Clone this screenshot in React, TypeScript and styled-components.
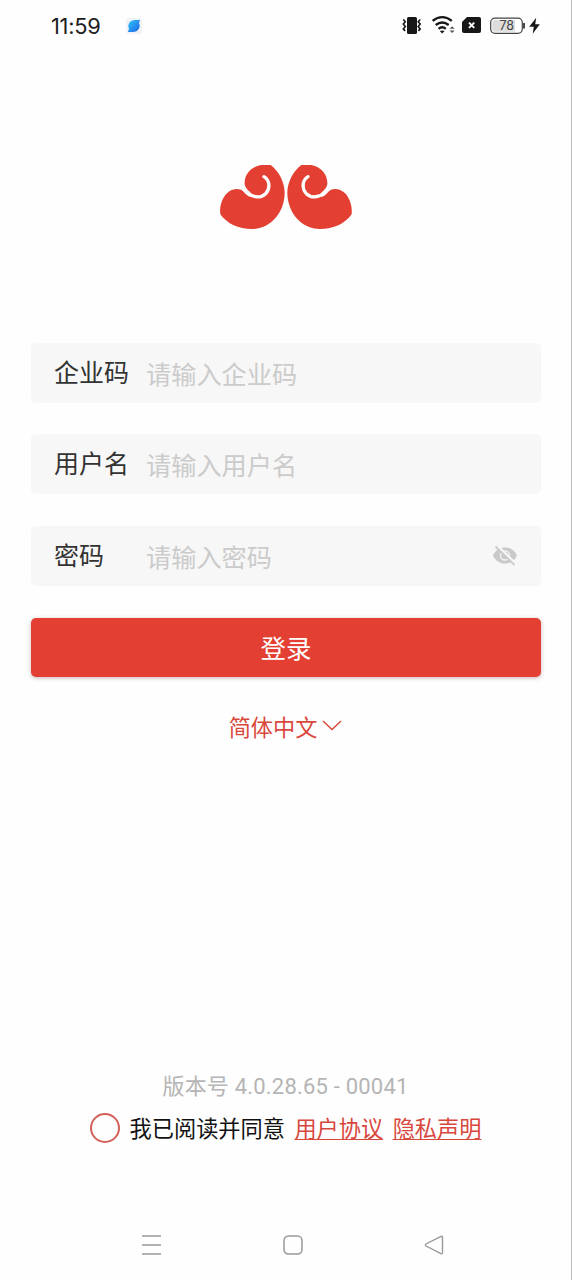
import React, { useState } from 'react';
import styled, { createGlobalStyle } from 'styled-components';

const red = '#e34033';

const GlobalStyle = createGlobalStyle`
  *, *::before, *::after { box-sizing: border-box; }
  body { margin: 0; background: #fefefe; }
  button, input { font: inherit; }
`;

const Screen = styled.main`
  display: flex;
  flex-direction: column;
  align-items: stretch;
  width: 572px;
  height: 1280px;
  overflow: hidden;
  background: #fefefe;
  border-right: 1px solid #bdbdbd;
  font-family: Roboto, 'Noto Sans CJK SC', sans-serif;
  white-space: nowrap;
`;

const StatusBar = styled.header`
  display: flex;
  align-items: center;
  justify-content: space-between;
  height: 51px;
  padding: 0 30px 0 51px;
`;

const StatusGroup = styled.div`
  display: flex;
  align-items: center;
`;

const Time = styled.span`
  width: 75px;
  font-family: Inter, sans-serif;
  font-size: 21.8px;
  letter-spacing: -0.25px;
  line-height: 30px;
  color: #202020;
`;

const Brand = styled.div`
  display: flex;
  justify-content: center;
  height: 291px;
  padding-top: 104px;
`;

const Form = styled.form`
  display: flex;
  flex-direction: column;
  padding: 1px 30px 0 31px;
`;

const Field = styled.label`
  display: flex;
  align-items: center;
  height: 60px;
  margin-bottom: 32px;
  padding: 0 23px;
  border-radius: 5px;
  background: #f7f7f7;
  &:first-child { margin-bottom: 31px; }
`;

const FieldName = styled.span`
  width: 92px;
  padding-top: 2px;
  font-size: 25px;
  line-height: 36px;
  color: #333;
`;

const FieldInput = styled.input`
  flex: 1;
  min-width: 0;
  height: 40px;
  margin-top: 4px;
  padding: 0;
  border: 0;
  outline: 0;
  background: transparent;
  font-size: 25.2px;
  color: #333;
  &::placeholder { color: #cbcbcb; opacity: 1; }
`;

const LoginButton = styled.button`
  height: 59px;
  padding: 2px 0 0;
  border: 0;
  border-radius: 5px;
  background: ${red};
  color: #fff;
  font-size: 25.5px;
  line-height: 36px;
  box-shadow: 0 1px 4px rgba(80, 30, 30, 0.32);
`;

const LanguageButton = styled.button`
  display: flex;
  align-items: center;
  align-self: center;
  gap: 5px;
  height: 34px;
  margin-top: 33px;
  padding: 0;
  border: 0;
  background: transparent;
  color: #d9483d;
  font-size: 22.2px;
  line-height: 34px;
  svg { margin-top: -2px; }
`;

const LanguageName = styled.span`
  padding-top: 1px;
`;

const Footer = styled.footer`
  display: flex;
  flex-direction: column;
  align-items: center;
  margin-top: auto;
`;

const Version = styled.div`
  height: 34px;
  padding-top: 1px;
  font-size: 22px;
  line-height: 34px;
  letter-spacing: 0.2px;
  color: #b5b5b5;
`;

const Agreement = styled.div`
  display: flex;
  align-items: center;
  height: 50px;
  font-size: 22.2px;
  line-height: 34px;
  color: #111;
`;

const AgreementText = styled.span`
  padding-top: 2px;
`;

const Radio = styled.button<{ $checked: boolean }>`
  width: 30px;
  height: 30px;
  margin-right: 10px;
  padding: 0;
  border: 2px solid #d4605b;
  border-radius: 50%;
  background: ${({ $checked }) => ($checked ? red : 'transparent')};
`;

const PolicyLink = styled.a`
  margin-left: 9.5px;
  padding-top: 2px;
  color: #d8473d;
  text-decoration: underline;
  text-decoration-thickness: 1px;
  text-underline-offset: 2px;
`;

const NavigationBar = styled.nav`
  display: flex;
  align-items: center;
  justify-content: space-between;
  height: 70px;
  margin-top: 57px;
  padding: 0 127px 0 141px;
`;

const AppMark = () => (
  <svg width="16" height="16" viewBox="0 0 16 16">
    <defs>
      <linearGradient id="mark" x1="0" y1="0" x2="1" y2="1">
        <stop stopColor="#31c9f5" /><stop offset="0.55" stopColor="#278df0" /><stop offset="1" stopColor="#1767d8" />
      </linearGradient>
    </defs>
    <rect width="16" height="16" rx="3" fill="#f0f4f8" />
    <path d="M2 13.500L3 11C1 6 4 2 9 2H14L13 5C15.200 9 12 14 7 14H2Z" fill="url(#mark)" />
  </svg>
);

const StatusIcons = () => (
  <svg width="140" height="24" viewBox="401 14 140 24">
    <g fill="none" stroke="#171717" strokeWidth="1.6">
      <path d="M403.3 19.5l2 2.2-2 2.4 2 2.4-2 2.4 1.8 2M420.2 19.5l-2 2.2 2 2.4-2 2.4 2 2.4-1.8 2" />
      <path d="M432.6 20.8Q442.2 13.5 451.8 20.8M435.7 25Q442.2 20 448.7 25M438.6 28.8Q442.2 25.8 445.8 28.8" strokeWidth="2.3" />
    </g>
    <rect x="407" y="17" width="10" height="17" rx="1.6" fill="#171717" />
    <path d="M439.8 31L442.2 33.5 444.6 31Q442.2 29.8 439.8 31Z" fill="#171717" />
    <path d="M449.6 28.7l2.5-2.5 2.5 2.5ZM449.6 30.6h5L452.1 33.1Z" fill="#555" />
    <path d="M467 17H479Q481 17 481 19V31Q481 33 479 33H464Q462 33 462 31V22Z" fill="#171717" />
    <path d="M469 22.7l5.2 5.2M474.2 22.7l-5.2 5.2" stroke="#fff" strokeWidth="1.9" />
    <rect x="490.7" y="18.2" width="31.6" height="15.2" rx="4.3" fill="#fff" stroke="#444" strokeWidth="1.2" />
    <path d="M495 20H515V31.7H495Q492.3 31.7 492.3 29V22.7Q492.3 20 495 20Z" fill="#ddd" />
    <path d="M524 23V28.6" stroke="#333" strokeWidth="1.8" />
    <text x="506.7" y="30.4" textAnchor="middle" fontFamily="Inter, sans-serif" fontSize="12.5" fill="#454545">78</text>
    <path d="M536.2 17.7L529.2 26.7H533.8L532.7 33.8L539.8 24.2H535.2Z" fill="#171717" />
  </svg>
);

const Horn = () => (
  <>
    <path fill={red} d="M153 30H182C207 48 224 83 224 114C223 173 183 221 126 222C85 222 52 207 31 178C27 149 43 103 80 102C90 102 97 105 105 112L121 125V112C107 101 103 91 104 82C105 54 126 35 153 30Z" />
    <path fill="none" stroke="#fefefe" strokeWidth="10" strokeLinecap="round" d="M162 65C180 76 181 101 167 116C151 131 127 127 109 112" />
    <path fill="#fefefe" d="M94 104L105 96C110 105 116 111 125 116L118 125C111 121 104 111 94 104Z" />
  </>
);

const Logo = () => (
  <svg width="152" height="85" viewBox="0 0 456 255">
    <Horn />
    <g transform="translate(456 0) scale(-1 1)"><Horn /></g>
  </svg>
);

const HiddenEye = () => (
  <svg width="26" height="22" viewBox="0 0 26 22">
    <path d="M1 10.500C3.500 5 8 2.500 13 2.500S22.500 5 25 10.500C22.500 16 18 18.500 13 18.500S3.500 16 1 10.500Z" fill="#c9c9c9" />
    <circle cx="13" cy="10.500" r="4.500" fill="none" stroke="#f2f2f2" strokeWidth="1.400" />
    <path d="M5.2 .7L24 18.7" stroke="#f7f7f7" strokeWidth="2.4" />
    <path d="M3.5 1.500L22.500 20" stroke="#cbcbcb" strokeWidth="1.8" />
  </svg>
);

export default function App() {
  const [accepted, setAccepted] = useState(false);
  return (
    <>
      <GlobalStyle />
      <Screen>
        <StatusBar>
          <StatusGroup><Time>11:59</Time><AppMark /></StatusGroup>
          <StatusIcons />
        </StatusBar>
        <Brand><Logo /></Brand>
        <Form onSubmit={(e) => e.preventDefault()}>
          <Field><FieldName>企业码</FieldName><FieldInput placeholder="请输入企业码" /></Field>
          <Field><FieldName>用户名</FieldName><FieldInput placeholder="请输入用户名" /></Field>
          <Field><FieldName>密码</FieldName><FieldInput type="password" placeholder="请输入密码" /><HiddenEye /></Field>
          <LoginButton>登录</LoginButton>
        </Form>
        <LanguageButton>
          <LanguageName>简体中文</LanguageName>
          <svg width="20" height="14" viewBox="0 0 20 14"><path d="M1 2L10 10.500L19 2" fill="none" stroke="#d9483d" strokeWidth="1.5" /></svg>
        </LanguageButton>
        <Footer>
          <Version>版本号 4.0.28.65 - 00041</Version>
          <Agreement>
            <Radio type="button" aria-label="同意" $checked={accepted} onClick={() => setAccepted(!accepted)} />
            <AgreementText>我已阅读并同意</AgreementText>
            <PolicyLink>用户协议</PolicyLink>
            <PolicyLink>隐私声明</PolicyLink>
          </Agreement>
        </Footer>
        <NavigationBar>
          <svg width="21" height="22" viewBox="0 0 21 22"><path d="M1 2H20M1 11H20M1 20H20" stroke="#999" strokeWidth="1.5" /></svg>
          <svg width="20" height="20" viewBox="0 0 20 20"><rect x="1" y="1" width="18" height="18" rx="4.500" fill="none" stroke="#999" strokeWidth="1.500" /></svg>
          <svg width="20" height="20" viewBox="0 0 20 20"><path d="M17 1.300L2 9Q.8 10 2 11L17 18.700Q18.500 19.300 18.500 17.500V2.500Q18.500 .8 17 1.300Z" fill="none" stroke="#999" strokeWidth="1.400" /></svg>
        </NavigationBar>
      </Screen>
    </>
  );
}
